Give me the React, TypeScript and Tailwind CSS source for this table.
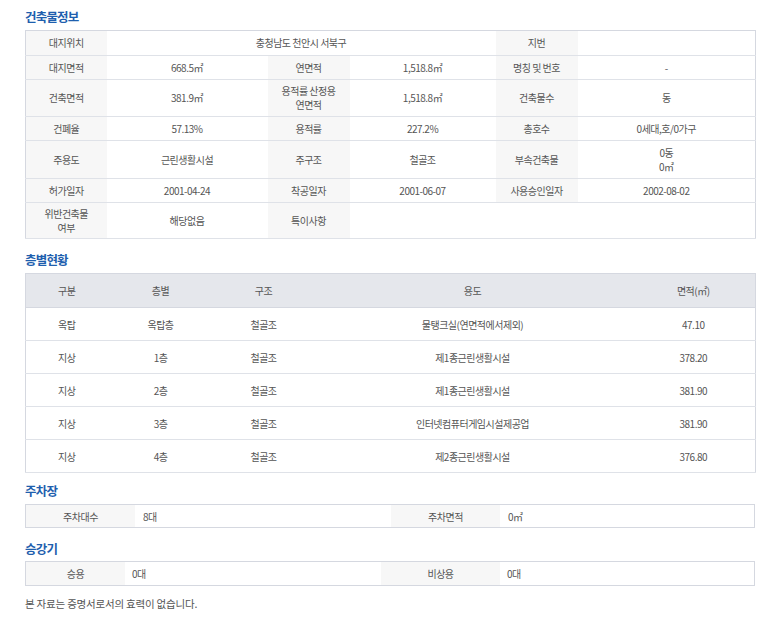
import React from "react";

const font = { fontFamily: '"Noto Sans CJK KR", "Noto Sans", sans-serif' };

function Title({ children }: { children: React.ReactNode }) {
  return (
    <h2 className="text-[12.5px] font-bold leading-[20px] tracking-[-0.8px] text-[#1f5fae]">
      {children}
    </h2>
  );
}

const th = "bg-[#f7f7f7] text-center font-normal border-b border-[#dfe2e8] leading-[14px]";
const td = "bg-white text-center border-b border-[#dfe2e8] leading-[14px]";

const floors = [
  ["옥탑", "옥탑층", "철골조", "물탱크실(연면적에서제외)", "47.10"],
  ["지상", "1층", "철골조", "제1종근린생활시설", "378.20"],
  ["지상", "2층", "철골조", "제1종근린생활시설", "381.90"],
  ["지상", "3층", "철골조", "인터넷컴퓨터게임시설제공업", "381.90"],
  ["지상", "4층", "철골조", "제2종근린생활시설", "376.80"],
];

export default function App() {
  return (
    <div
      className="w-[773px] min-h-[627px] bg-white pl-[25px] pt-[7px] text-[10px] tracking-[-0.5px] text-[#555]"
      style={font}
    >
      <div className="w-[730px]">
        {/* 건축물정보 */}
        <Title>건축물정보</Title>
        <table className="mt-[3px] w-[730px] table-fixed border-collapse border border-[#d5d8e0]">
          <colgroup>
            <col className="w-[81px]" />
            <col className="w-[161px]" />
            <col className="w-[82px]" />
            <col className="w-[146px]" />
            <col className="w-[82px]" />
            <col className="w-[178px]" />
          </colgroup>
          <tbody>
            <tr className="h-[25px]">
              <th className={th}>대지위치</th>
              <td className={td} colSpan={3}>충청남도 천안시 서북구</td>
              <th className={th}>지번</th>
              <td className={td}></td>
            </tr>
            <tr className="h-[24px]">
              <th className={th}>대지면적</th>
              <td className={td}>668.5㎡</td>
              <th className={th}>연면적</th>
              <td className={td}>1,518.8㎡</td>
              <th className={th}>명칭 및 번호</th>
              <td className={td}>-</td>
            </tr>
            <tr className="h-[37px]">
              <th className={th}>건축면적</th>
              <td className={td}>381.9㎡</td>
              <th className={th}>
                용적률 산정용
                <br />
                연면적
              </th>
              <td className={td}>1,518.8㎡</td>
              <th className={th}>건축물수</th>
              <td className={td}>동</td>
            </tr>
            <tr className="h-[24px]">
              <th className={th}>건폐율</th>
              <td className={td}>57.13%</td>
              <th className={th}>용적률</th>
              <td className={td}>227.2%</td>
              <th className={th}>총호수</th>
              <td className={td}>0세대,호/0가구</td>
            </tr>
            <tr className="h-[38px]">
              <th className={th}>주용도</th>
              <td className={td}>근린생활시설</td>
              <th className={th}>주구조</th>
              <td className={td}>철골조</td>
              <th className={th}>부속건축물</th>
              <td className={td}>
                0동
                <br />
                0㎡
              </td>
            </tr>
            <tr className="h-[24px]">
              <th className={th}>허가일자</th>
              <td className={td}>2001-04-24</td>
              <th className={th}>착공일자</th>
              <td className={td}>2001-06-07</td>
              <th className={th}>사용승인일자</th>
              <td className={td}>2002-08-02</td>
            </tr>
            <tr className="h-[36px]">
              <th className={th}>
                위반건축물
                <br />
                여부
              </th>
              <td className={td}>해당없음</td>
              <th className={th}>특이사항</th>
              <td className={td} colSpan={3}></td>
            </tr>
          </tbody>
        </table>

        {/* 층별현황 */}
        <div className="mt-[11px]">
          <Title>층별현황</Title>
        </div>
        <table className="mt-[3px] w-[730px] table-fixed border-collapse border border-[#d5d8e0]">
          <colgroup>
            <col className="w-[82px]" />
            <col className="w-[106px]" />
            <col className="w-[100px]" />
            <col className="w-[318px]" />
            <col className="w-[124px]" />
          </colgroup>
          <thead>
            <tr className="h-[34px] bg-[#e5e7ec]">
              {["구분", "층별", "구조", "용도", "면적(㎡)"].map((h) => (
                <th key={h} className="border-b border-[#d5d8e0] text-center font-normal">
                  {h}
                </th>
              ))}
            </tr>
          </thead>
          <tbody>
            {floors.map((row, i) => (
              <tr key={i} className="h-[33px]">
                {row.map((c, j) => (
                  <td key={j} className="border-b border-[#dfe2e8] text-center">
                    {c}
                  </td>
                ))}
              </tr>
            ))}
          </tbody>
        </table>

        {/* 주차장 */}
        <div className="mt-[8px]">
          <Title>주차장</Title>
        </div>
        <div className="mt-[3px] grid h-[24px] grid-cols-[109px_256px_109px_1fr] border border-[#d5d8e0]">
          <div className="flex items-center justify-center bg-[#f7f7f7]">주차대수</div>
          <div className="flex items-center pl-[8px]">8대</div>
          <div className="flex items-center justify-center bg-[#f7f7f7]">주차면적</div>
          <div className="flex items-center pl-[8px]">0㎡</div>
        </div>

        {/* 승강기 */}
        <div className="mt-[11px]">
          <Title>승강기</Title>
        </div>
        <div className="mt-[2px] grid h-[25px] grid-cols-[99px_256px_119px_1fr] border border-[#d5d8e0]">
          <div className="flex items-center justify-center bg-[#f7f7f7]">승용</div>
          <div className="flex items-center pl-[7px]">0대</div>
          <div className="flex items-center justify-center bg-[#f7f7f7]">비상용</div>
          <div className="flex items-center pl-[7px]">0대</div>
        </div>

        <p className="mt-[10px] text-[10.5px] leading-[16px] tracking-[-0.2px] text-[#555]">
          본 자료는 증명서로서의 효력이 없습니다.
        </p>
      </div>
    </div>
  );
}
